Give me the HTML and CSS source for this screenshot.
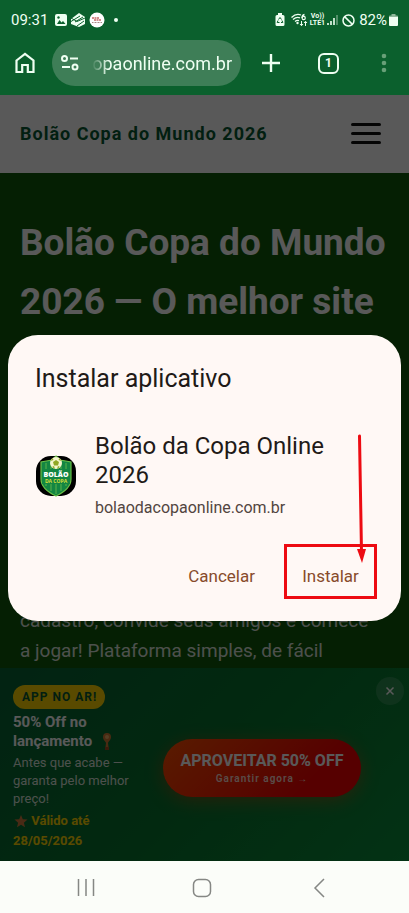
FILE: index.html
```html
<!DOCTYPE html>
<html lang="pt-BR">
<head>
    <meta charset="UTF-8">
    <meta name="viewport" content="width=device-width, initial-scale=1.0">
    <title>Bolão Copa do Mundo 2026</title>
    <link rel="stylesheet" href="styles.css">
</head>
<body>

    <!-- Phone status bar -->
    <div class="status-bar">
        <div class="status-left">
            <span class="clock">09:31</span>
            <svg width="12" height="14" viewBox="0 0 12 14"><rect y="1" width="12" height="12" rx="2" fill="#effff2"/><path d="M2 11l2.500-4 2 2.500L8 8l2.500 3z" fill="#0b602d"/><circle cx="3.500" cy="4.500" r="1.200" fill="#0b602d"/></svg>
            <svg width="14" height="14" viewBox="0 0 14 14"><path d="M0 6L8 0l6 4v7l-6 3-8-3z" fill="#effff2"/><path d="M0 8.500L9 3M4 9l8-5M0 5l6 3.500L14 5M6 13l7-5" stroke="#0b602d" fill="none"/></svg>
            <svg width="16" height="16" viewBox="0 0 16 16"><circle cx="8" cy="8" r="7.500" fill="#fff"/><path d="M3 6h7M5 8h7" stroke="#c66a6a" stroke-width="1.500" stroke-dasharray="2 .5"/><path d="M3 10.500h10" stroke="#a88" stroke-dasharray="1 .5"/></svg>
            <span class="status-dot"></span>
        </div>
        <div class="status-right">
            <svg width="10" height="14" viewBox="0 0 10 14"><path d="M3 0h4v2h1a1.500 1.500 0 0 1 1.500 1.500v8A1.500 1.500 0 0 1 8 13H2a1.500 1.500 0 0 1-1.500-1.500v-8A1.500 1.500 0 0 1 2 2h1z" fill="#effff2"/><path d="M3.500 6.500L5 4.500l1.500 2M7 7.500l.8 2H6M4.500 9.500H2.200l.8-2" stroke="#0b602d" fill="none"/></svg>
            <svg class="wifi" width="17" height="14" viewBox="0 0 17 14"><path d="M.5 4.500Q5 0 10 2M2 6.500Q5.500 3.300 9 4.800M4 8.500q2-1.600 4-.8" stroke="#effff2" stroke-width="1.300" fill="none"/><circle cx="6.500" cy="10" r="1.200" fill="#effff2"/><path d="M13.500 1.500q-2.500.6-2.500 3.400" stroke="#effff2" stroke-width="1.300" fill="none"/><circle cx="12.700" cy="5" r="1.600" stroke="#effff2" stroke-width="1.200" fill="none"/><path d="M10.500 8v4.500M9 11l1.500 1.700L12 11M14.500 13V8.500M13 10l1.500-1.700L16 10" stroke="#effff2" fill="none"/></svg>
            <span class="carrier"><span>Vo))</span><span>LTE1</span></span>
            <svg width="11" height="12" viewBox="0 0 11 12"><path d="M1 11V9M4 11V7" stroke="#effff2" stroke-width="1.600"/><path d="M7 11V4" stroke="#effff2" stroke-width="1.600"/><path d="M10 11V1" stroke="#6da17f" stroke-width="1.500"/></svg>
            <svg class="blocked" width="13" height="13" viewBox="0 0 13 13"><circle cx="6.500" cy="6.500" r="5.500" stroke="#effff2" stroke-width="1.500" fill="none"/><path d="M2.600 2.600l7.800 7.800" stroke="#effff2" stroke-width="1.500"/></svg>
            <span class="battery-level">82%</span>
            <svg width="9" height="14" viewBox="0 0 9 14"><path d="M2.500 1h4v1.500H8A1 1 0 0 1 9 4H0a1 1 0 0 1 1-1.500h1.500z" fill="#8eb89a"/><path d="M0 4h9v8a1 1 0 0 1-1 1H1a1 1 0 0 1-1-1z" fill="#effff2"/></svg>
        </div>
    </div>

    <!-- Browser toolbar -->
    <div class="toolbar">
        <div class="toolbar-main">
            <button class="tool" aria-label="Página inicial">
                <svg width="20" height="22" viewBox="0 0 20 22"><path d="M1.500 8.500L10 2l8.500 6.500V20h-5.700v-7H7.200v7H1.500z" stroke="#effff2" stroke-width="2.200" fill="none"/></svg>
            </button>
            <div class="address">
                <svg width="18" height="16" viewBox="0 0 18 16"><g stroke="#effff2" stroke-width="2" fill="none"><circle cx="3.500" cy="3.500" r="2.500"/><path d="M9 3.500h8M1 12h8"/><circle cx="14" cy="12" r="2.500"/></g></svg>
                <input type="text" value="opaonline.com.br" aria-label="Endereço">
            </div>
        </div>
        <div class="toolbar-side">
            <button class="tool" aria-label="Nova guia">
                <svg width="20" height="20" viewBox="0 0 20 20"><path d="M10 1v18M1 10h18" stroke="#effff2" stroke-width="2.400"/></svg>
            </button>
            <button class="tool tabs" aria-label="Guias abertas">1</button>
            <button class="tool" aria-label="Menu do navegador">
                <svg width="6" height="20" viewBox="0 0 6 20"><g fill="#68a078"><circle cx="3" cy="3" r="2.300"/><circle cx="3" cy="10" r="2.300"/><circle cx="3" cy="17" r="2.300"/></g></svg>
            </button>
        </div>
    </div>

    <div class="page">
        <header class="site-header">
            <a class="brand" href="#">Bolão Copa do Mundo 2026</a>
            <button class="hamburger" aria-label="Abrir menu"><span></span><span></span><span></span></button>
        </header>

        <section class="hero">
            <h1>Bolão Copa do Mundo 2026 — O melhor site</h1>
            <p>cadastro, convide seus amigos e comece a jogar! Plataforma simples, de fácil</p>
        </section>

        <section class="promo">
            <div class="promo-text">
                <span class="badge">APP NO AR!</span>
                <h2>50% Off no lançamento
                    <svg width="10" height="17" viewBox="0 0 10 17"><path d="M1 4a4 4 0 0 1 8 0c0 3-2.500 4-3 6l.5 4h-3l.5-4C3.500 8 1 7 1 4z" fill="#d17a35"/><circle cx="5" cy="4" r="2" fill="#efb068"/><path d="M3 14h4v3H3z" fill="#a14a22"/></svg>
                </h2>
                <p>Antes que acabe — garanta pelo melhor preço!</p>
                <strong>
                    <svg width="14" height="14" viewBox="0 0 14 14"><path d="M7 1l1.800 4.200 4.700.4-3.600 3.100 1.100 4.600L7 10.800l-4 2.500 1.100-4.600L.5 5.600l4.700-.4z" fill="#d07a3c"/></svg>
                    Válido até 28/05/2026
                </strong>
            </div>
            <button class="offer">
                <span class="offer-main">APROVEITAR 50% OFF</span>
                <span class="offer-sub">Garantir agora →</span>
            </button>
            <button class="close" aria-label="Fechar">
                <svg width="10" height="10" viewBox="0 0 10 10"><path d="M1.500 1.500l7 7M8.500 1.500l-7 7" stroke="#fff" stroke-width="1.500"/></svg>
            </button>
        </section>

        <!-- Install dialog -->
        <div class="overlay">
            <div class="dialog" role="dialog" aria-labelledby="dialogTitle">
                <h2 id="dialogTitle">Instalar aplicativo</h2>
                <div class="app">
                    <svg class="app-icon" width="42" height="42" viewBox="0 0 42 42">
                        <rect x="1" y="1" width="40" height="40" rx="15" fill="#000"/>
                        <path d="M21 1l4 4 11 2v17q0 10-15 17Q6 34 6 24V7l11-2z" fill="#138642" stroke="#69bd45" stroke-width="1.200"/>
                        <path d="M11 8v23M16 8v28M21 8v31M26 8v28M31 8v23" stroke="#46a447" stroke-width="1.500"/>
                        <path d="M7 14h28v15H7z" fill="#138642"/>
                        <circle cx="21" cy="8" r="6" fill="#f5f6cc"/>
                        <path d="M21 5l3 2-1 3.500h-4L18 7zM15.500 6l2-3 1 2zM26.500 6l-2-3-1 2zM17 12l2-1 1 3zM25 12l-2-1-1 3z" fill="#91a824"/>
                        <text x="21" y="22" text-anchor="middle" font-family="Open Sans, sans-serif" font-size="7" font-weight="800" fill="#fff">BOLÃO</text>
                        <text x="21" y="28" text-anchor="middle" font-family="Open Sans, sans-serif" font-size="5" font-weight="700" fill="#d8df39">DA COPA</text>
                    </svg>
                    <div class="app-info">
                        <h3>Bolão da Copa Online 2026</h3>
                        <p>bolaodacopaonline.com.br</p>
                    </div>
                </div>
                <div class="actions">
                    <button>Cancelar</button>
                    <button class="install">Instalar</button>
                </div>
                <svg class="arrow" width="12" height="130" viewBox="0 0 12 130"><path d="M3.500 2L5.500 118" stroke="#ed0b12" stroke-width="3" stroke-linecap="round"/><path d="M1 115h9L6 129z" fill="#ed0b12"/></svg>
            </div>
        </div>
    </div>

    <!-- System navigation -->
    <nav class="system-nav">
        <button aria-label="Recentes"><svg width="20" height="20" viewBox="0 0 20 20"><path d="M2.500 1v17M10 1v17M17.500 1v17"/></svg></button>
        <button aria-label="Início"><svg width="20" height="20" viewBox="0 0 20 20"><rect x="1.500" y="1.500" width="17" height="17" rx="5"/></svg></button>
        <button aria-label="Voltar"><svg width="20" height="20" viewBox="0 0 20 20"><path d="M15 1l-9 9 9 9"/></svg></button>
    </nav>

</body>
</html>
```
FILE: styles.css
```css
* {
    box-sizing: border-box;
}
body {
    font-family: Roboto, "Liberation Sans", sans-serif;
    margin: 0;
    min-height: 100vh;
    display: flex;
    flex-direction: column;
    background: #0b602d;
}
h1, h2, h3, p {
    margin: 0;
}
button {
    font-family: inherit;
    border: none;
    background: none;
    padding: 0;
    cursor: pointer;
}
svg {
    flex-shrink: 0;
}

/* Status bar */
.status-bar {
    display: flex;
    justify-content: space-between;
    height: 40px;
    padding: 0 11px;
    color: #effff2;
    font-size: 15px;
}
.status-left, .status-right {
    display: flex;
    align-items: center;
}
.status-left {
    gap: 4px;
}
.clock {
    margin-right: 3px;
}
.status-dot {
    width: 4px;
    height: 4px;
    margin-left: 5px;
    border-radius: 50%;
    background: #effff2;
}
.status-right {
    gap: 2px;
}
.wifi {
    margin-left: 4px;
}
.carrier {
    display: flex;
    flex-direction: column;
    align-items: center;
    font-size: 7px;
    line-height: 7px;
    font-weight: 700;
}
.blocked {
    margin: 0 2px;
}

/* Toolbar */
.toolbar, .toolbar-main, .toolbar-side {
    display: flex;
    align-items: center;
}
.toolbar {
    justify-content: space-between;
    padding: 0 22px 9px 15px;
}
.toolbar-main {
    gap: 17px;
}
.toolbar-side {
    gap: 37px;
}
.tool {
    display: flex;
    align-items: center;
    justify-content: center;
}
.address {
    display: flex;
    align-items: center;
    gap: 9px;
    width: 189px;
    height: 46px;
    padding: 0 9px;
    border-radius: 23px;
    background: #3e7e57;
}
.address input {
    flex: 1;
    min-width: 0;
    padding: 0;
    border: none;
    outline: none;
    background: none;
    color: #effff2;
    font-family: Roboto, sans-serif;
    font-size: 18px;
    text-align: right;
    -webkit-mask-image: linear-gradient(to right, transparent 4px, #000 20px);
    mask-image: linear-gradient(to right, transparent 4px, #000 20px);
}
.tabs {
    width: 21px;
    height: 21px;
    margin-right: 5px;
    border: 2px solid #effff2;
    border-radius: 6px;
    color: #effff2;
    font-size: 12px;
    font-weight: 700;
}

/* Site */
.page {
    position: relative;
    flex: 1;
    display: flex;
    flex-direction: column;
    background: #115b09;
}
.site-header {
    display: flex;
    align-items: center;
    justify-content: space-between;
    height: 78px;
    padding: 0 28px 2px 20px;
    background: #fff;
}
.brand {
    color: #075a32;
    font-size: 18px;
    font-weight: 700;
    letter-spacing: 1px;
    text-decoration: none;
}
.hamburger {
    display: flex;
    flex-direction: column;
    gap: 6px;
    width: 30px;
}
.hamburger span {
    height: 3px;
    border-radius: 2px;
    background: #111;
}
.hero {
    flex: 1;
    display: flex;
    flex-direction: column;
    justify-content: space-between;
    padding: 40px 20px 2px;
    color: #fff;
}
.hero h1 {
    font-size: 37px;
    line-height: 59px;
    font-weight: 700;
}
.hero p {
    padding-right: 12px;
    font-size: 19px;
    line-height: 30px;
    color: #dde5dd;
}

/* Promo banner */
.promo {
    position: relative;
    display: flex;
    align-items: center;
    justify-content: space-between;
    padding: 17px 48px 10px 13px;
    background: linear-gradient(135deg, #066436, #07752e 50%, #0b903c);
    color: #fff;
}
.promo-text {
    width: 124px;
}
.badge {
    display: inline-block;
    padding: 0 8px 0 9px;
    border-radius: 12px;
    background: #ffd500;
    color: #075a32;
    font-size: 12px;
    line-height: 24px;
    font-weight: 700;
    letter-spacing: 1px;
}
.promo h2 {
    margin-top: 4px;
    font-size: 15px;
    line-height: 19px;
}
.promo h2 svg {
    margin-left: 6px;
    vertical-align: -4px;
}
.promo p {
    margin: 3px 0;
    font-size: 13px;
    line-height: 18px;
    color: #dde5dd;
}
.promo strong {
    display: block;
    color: #ffd500;
    font-size: 13px;
    line-height: 20px;
}
.promo strong svg {
    margin-left: 1px;
    vertical-align: -3px;
}
.offer {
    display: flex;
    flex-direction: column;
    align-items: center;
    justify-content: center;
    gap: 2px;
    width: 198px;
    height: 58px;
    border-radius: 29px;
    background: linear-gradient(135deg, #ff5000, #f50000 75%);
    box-shadow: 0 4px 18px rgba(255, 60, 0, 0.4);
    color: #fff;
    white-space: nowrap;
}
.offer-main {
    font-size: 16px;
    line-height: 19px;
    font-weight: 700;
}
.offer-sub {
    font-size: 10px;
    line-height: 14px;
    font-weight: 600;
    letter-spacing: 1px;
    color: #ffd9d0;
}
.close {
    position: absolute;
    top: 9px;
    right: 5px;
    display: flex;
    align-items: center;
    justify-content: center;
    width: 28px;
    height: 28px;
    border-radius: 50%;
    background: rgba(255, 255, 255, 0.15);
}

/* Install dialog */
.overlay {
    position: absolute;
    inset: 0;
    display: flex;
    align-items: center;
    justify-content: center;
    padding: 0 8px;
    background: rgba(0, 0, 0, 0.65);
}
.dialog {
    position: relative;
    width: 100%;
    padding: 28px 24px 22px 27px;
    border-radius: 30px;
    background: #fff8f5;
    color: #211a17;
}
.dialog h2 {
    font-size: 25px;
    line-height: 32px;
    font-weight: 400;
}
.app {
    display: flex;
    align-items: center;
    gap: 18px;
    margin-top: 37px;
}
.app h3 {
    font-size: 24px;
    line-height: 29px;
    font-weight: 400;
}
.app p {
    margin-top: 6px;
    color: #524540;
    font-size: 16px;
    line-height: 24px;
}
.actions {
    display: flex;
    align-items: center;
    justify-content: flex-end;
    gap: 29px;
    margin-top: 24px;
}
.actions button {
    padding-top: 8px;
    color: #884b2b;
    font-size: 17px;
    font-weight: 400;
}
.actions .install {
    width: 93px;
    height: 55px;
    border: 3px solid #ed0b12;
}
.arrow {
    position: absolute;
    right: 33px;
    bottom: 57px;
}

/* System navigation */
.system-nav {
    display: flex;
    justify-content: space-around;
    align-items: center;
    height: 52px;
    padding: 2px 32px 0 28px;
    background: #fbfdf9;
}
.system-nav svg {
    display: block;
    fill: none;
    stroke: #858784;
    stroke-width: 1.5;
}
```
